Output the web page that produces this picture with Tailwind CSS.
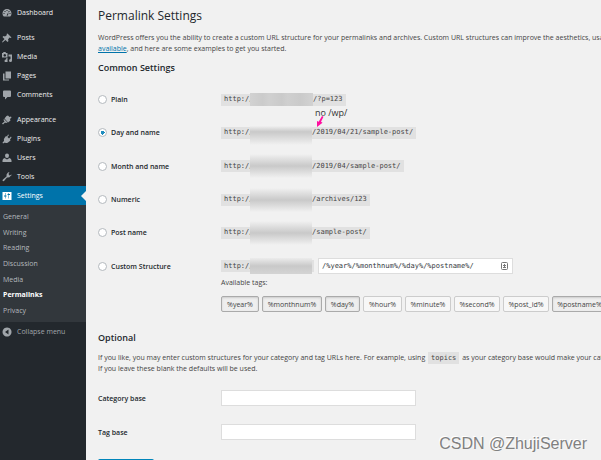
<!DOCTYPE html>
<html lang="en">
<head>
    <meta charset="UTF-8">
    <meta name="viewport" content="width=device-width, initial-scale=1.0">
    <title>Permalink Settings</title>
    <script src="https://cdn.jsdelivr.net/npm/@tailwindcss/browser@4"></script>
</head>
<body class="relative flex h-screen overflow-hidden bg-[#f1f1f1] font-['Open_Sans',sans-serif] text-[7px] leading-[11px] text-[#444]">
    <!-- Admin menu -->
    <nav class="w-[86px] shrink-0 bg-[#23282d] pt-[3px] text-[#eee]">
        <a href="#" class="flex h-[19px] items-center gap-[5px] pl-[2px] font-medium">
            <svg class="size-[10px] text-[#a0a5aa]" viewBox="0 0 20 20" fill="currentColor"><path fill-rule="evenodd" d="M3.500 17A9 9 0 1 1 16.500 17zM9 4v2h2V4zM5 6v2h2V6zM13 6v2h2V6zM3 10v2h2v-2zM15 10v2h2v-2zM9 15h3l1-7z"/></svg>
            Dashboard
        </a>
        <a href="#" class="mt-[6px] flex h-[19px] items-center gap-[5px] pl-[2px] font-medium">
            <svg class="size-[10px] text-[#a0a5aa]" viewBox="0 0 20 20" fill="currentColor"><path d="M11 1l8 8-2 1-2-1-3 4 1 3-2 2-4-4-6 5-1-1 5-6-4-4 2-2 3 1 4-3-1-2z"/></svg>
            Posts
        </a>
        <a href="#" class="flex h-[19px] items-center gap-[5px] pl-[2px] font-medium">
            <svg class="size-[10px] text-[#a0a5aa]" viewBox="0 0 20 20" fill="currentColor"><path fill-rule="evenodd" d="M0 2h2l1-2h4l1 2h3v9H0zM5.500 4a2.500 2.500 0 1 0 .1 0zM13 5h7v12a3 3 0 1 1-3-3V9h-4zM9 12h2v5a3 3 0 1 1-3-2z"/></svg>
            Media
        </a>
        <a href="#" class="flex h-[19px] items-center gap-[5px] pl-[2px] font-medium">
            <svg class="size-[10px] text-[#a0a5aa]" viewBox="0 0 20 20" fill="currentColor"><path d="M7 1h11v14H7zM2 5h3v12h9v2H2z"/></svg>
            Pages
        </a>
        <a href="#" class="flex h-[19px] items-center gap-[5px] pl-[2px] font-medium">
            <svg class="size-[10px] text-[#a0a5aa]" viewBox="0 0 20 20" fill="currentColor"><path d="M4 1h12q2 0 2 2v9q0 2-2 2h-5l-5 5v-5H4q-2 0-2-2V3q0-2 2-2z"/></svg>
            Comments
        </a>
        <a href="#" class="mt-[6px] flex h-[19px] items-center gap-[5px] pl-[2px] font-medium">
            <svg class="size-[10px] text-[#a0a5aa]" viewBox="0 0 20 20" fill="currentColor"><path d="M12 1l3 3 3-1 1 2-3 3 1 3-5 4-7-8 4-5zM4 8l7 7-3 1-2-1-4 4-2-2 5-4-2-3z"/></svg>
            Appearance
        </a>
        <a href="#" class="flex h-[19px] items-center gap-[5px] pl-[2px] font-medium">
            <svg class="size-[10px] text-[#a0a5aa]" viewBox="0 0 20 20" fill="currentColor"><path d="M12 1l2 1-3 4 3 3 4-4 1 2-3 4 1 2-5 4q-4 2-6 0l-4 2-1-2 3-3q-1-4 1-6l3-4 2 1z"/></svg>
            Plugins
        </a>
        <a href="#" class="flex h-[19px] items-center gap-[5px] pl-[2px] font-medium">
            <svg class="size-[10px] text-[#a0a5aa]" viewBox="0 0 20 20" fill="currentColor"><path d="M10 1a4 4 0 0 1 4 4q0 5-4 5T6 5a4 4 0 0 1 4-4zM5 10l5 3 5-3q4 1 4 5v3H1v-3q0-4 4-5z"/></svg>
            Users
        </a>
        <a href="#" class="flex h-[19px] items-center gap-[5px] pl-[2px] font-medium">
            <svg class="size-[10px] text-[#a0a5aa]" viewBox="0 0 20 20" fill="currentColor"><path d="M17 8q-2 4-7 3l-6 7q-2 1-3-1 0-1 1-2l7-6q-1-5 3-8l3-1-2 4 2 3 4-2q1 1-2 3z"/></svg>
            Tools
        </a>
        <a href="#" class="relative flex h-[19px] items-center gap-[5px] bg-[#0073aa] pl-[2px] font-medium text-white">
            <svg class="size-[10px]" viewBox="0 0 20 20" fill="currentColor"><path fill-rule="evenodd" d="M1 2h18v16H1zM6 4v5H4v2h2v4h1v-4h2V9H7V4zM13 4v2h-2v2h2v7h1V8h2V6h-2V4z"/></svg>
            Settings
            <span class="absolute right-0 top-[5px] border-y-[5px] border-r-[5px] border-y-transparent border-r-[#f1f1f1]"></span>
        </a>
        <div class="flex h-[117px] flex-col bg-[#32373c] py-1 pl-[3px] text-[#b4b9be]">
            <a href="#" class="flex flex-1 items-center">General</a>
            <a href="#" class="flex flex-1 items-center">Writing</a>
            <a href="#" class="flex flex-1 items-center">Reading</a>
            <a href="#" class="flex flex-1 items-center">Discussion</a>
            <a href="#" class="flex flex-1 items-center">Media</a>
            <a href="#" class="flex flex-1 items-center font-bold text-white">Permalinks</a>
            <a href="#" class="flex flex-1 items-center">Privacy</a>
        </div>
        <button type="button" class="flex h-[19px] items-center gap-[5px] pl-[2px] text-[#a0a5aa]">
            <svg class="size-[10px]" viewBox="0 0 20 20" fill="currentColor"><path fill-rule="evenodd" d="M10 1a9 9 0 1 0 .1 0zM13 5v10l-7-5z"/></svg>
            Collapse menu
        </button>
    </nav>

    <main class="min-w-0 flex-1 overflow-hidden pl-3 whitespace-nowrap">
        <h1 class="mt-2 text-[12px] leading-4 text-[#23282d]">Permalink Settings</h1>
        <p class="mt-2">WordPress offers you the ability to create a custom URL structure for your permalinks and archives. Custom URL structures can improve the aesthetics, usability,<br><a href="#" class="text-[#0073aa] underline">available</a>, and here are some examples to get you started.</p>
        <h2 class="mt-[7px] text-[9px] leading-[14px] font-semibold text-[#23282d]">Common Settings</h2>

        <form>
            <div class="mt-2 grid h-[200px] grid-rows-6 text-[#23282d]">
                <div class="flex items-center">
                    <label class="flex w-[123px] items-center gap-1 font-semibold"><input type="radio" name="structure" class="size-[9px] appearance-none rounded-full border border-[#b4b9be] bg-white checked:bg-[radial-gradient(circle,#1e8cbe_2px,#fff_2px)]">Plain</label>
                    <code class="flex h-3 items-center bg-[#e1e1e1] px-[3px] font-['DejaVu_Sans_Mono',monospace] text-[7px] text-[#444]"><span class="w-[26px]">http://</span><span class="relative h-[13px] w-[63px] bg-[linear-gradient(90deg,#d2d2d2,#cbcbcb_20%,#d0d0d0_30%,#cacaca_50%,#cfcfcf_60%,#cacaca_80%,#d2d2d2)]"></span>/?p=123</code>
                </div>
                <div class="relative flex items-center">
                    <label class="flex w-[123px] items-center gap-1 font-semibold"><input type="radio" name="structure" checked class="size-[9px] appearance-none rounded-full border border-[#b4b9be] bg-white checked:bg-[radial-gradient(circle,#1e8cbe_2px,#fff_2px)]">Day and name</label>
                    <code class="flex h-3 items-center bg-[#e1e1e1] px-[3px] font-['DejaVu_Sans_Mono',monospace] text-[7px] text-[#444]"><span class="w-[26px]">http://</span><span class="relative h-6 w-[62px] bg-linear-to-b from-[#f1f1f1] from-20% via-[#c9c9c9] via-45% to-[#f1f1f1]"></span>/2019/04/21/sample-post/</code>
                    <!-- Note above the path -->
                    <span class="absolute -top-[9px] left-[217px] text-[9px] leading-3 text-[#333]">no /wp/</span>
                    <svg class="absolute top-0 left-[218px] h-3 w-2 text-[#ff0fa0]" viewBox="0 0 8 12" fill="currentColor"><path d="M6 0l1.500.7-2.500 5 1.500 1L1 11V5l1.700.8z"/></svg>
                </div>
                <div class="flex items-center">
                    <label class="flex w-[123px] items-center gap-1 font-semibold"><input type="radio" name="structure" class="size-[9px] appearance-none rounded-full border border-[#b4b9be] bg-white checked:bg-[radial-gradient(circle,#1e8cbe_2px,#fff_2px)]">Month and name</label>
                    <code class="flex h-3 items-center bg-[#e1e1e1] px-[3px] font-['DejaVu_Sans_Mono',monospace] text-[7px] text-[#444]"><span class="w-[26px]">http://</span><span class="relative h-6 w-[62px] bg-linear-to-b from-[#f1f1f1] via-[#c9c9c9] to-[#f1f1f1]"></span>/2019/04/sample-post/</code>
                </div>
                <div class="flex items-center">
                    <label class="flex w-[123px] items-center gap-1 font-semibold"><input type="radio" name="structure" class="size-[9px] appearance-none rounded-full border border-[#b4b9be] bg-white checked:bg-[radial-gradient(circle,#1e8cbe_2px,#fff_2px)]">Numeric</label>
                    <code class="flex h-3 items-center bg-[#e1e1e1] px-[3px] font-['DejaVu_Sans_Mono',monospace] text-[7px] text-[#444]"><span class="w-[26px]">http://</span><span class="relative h-6 w-[62px] bg-linear-to-b from-[#f1f1f1] via-[#c9c9c9] to-[#f1f1f1]"></span>/archives/123</code>
                </div>
                <div class="flex items-center">
                    <label class="flex w-[123px] items-center gap-1 font-semibold"><input type="radio" name="structure" class="size-[9px] appearance-none rounded-full border border-[#b4b9be] bg-white checked:bg-[radial-gradient(circle,#1e8cbe_2px,#fff_2px)]">Post name</label>
                    <code class="flex h-3 items-center bg-[#e1e1e1] px-[3px] font-['DejaVu_Sans_Mono',monospace] text-[7px] text-[#444]"><span class="w-[26px]">http://</span><span class="relative h-6 w-[62px] bg-linear-to-b from-[#f1f1f1] via-[#c9c9c9] to-[#f1f1f1]"></span>/sample-post/</code>
                </div>
                <div class="flex items-center">
                    <label class="flex w-[123px] items-center gap-1 font-semibold"><input type="radio" name="structure" class="size-[9px] appearance-none rounded-full border border-[#b4b9be] bg-white checked:bg-[radial-gradient(circle,#1e8cbe_2px,#fff_2px)]">Custom Structure</label>
                    <code class="flex h-3 items-center bg-[#e1e1e1] pl-[3px] pr-[2px] font-['DejaVu_Sans_Mono',monospace] text-[7px] text-[#444]"><span class="w-[26px]">http://</span><span class="relative h-4 w-[62px] bg-linear-to-b from-[#ececec] via-[#c9c9c9] to-[#d4d4d4]"></span></code>
                    <div class="relative ml-1">
                        <input type="text" aria-label="Custom structure" value="/%year%/%monthnum%/%day%/%postname%/" class="block h-4 w-[195px] border border-[#ddd] bg-white px-[3px] font-['DejaVu_Sans_Mono',monospace] text-[7px] text-[#32373c]">
                        <svg class="absolute top-1 right-[5px] h-2 w-[7px]" viewBox="0 0 7 8" fill="none" stroke="#777"><rect x=".5" y=".5" width="6" height="7" rx="1"/><path d="M3.500 2v3M2 3.500h3M2 5.500h3"/></svg>
                    </div>
                </div>
            </div>

            <div class="pl-[123px]">
                <p class="-mt-[6px]">Available tags:</p>
                <div class="mt-2 flex gap-[3px]">
                    <button type="button" class="h-4 w-[38px] shrink-0 rounded-xs border border-[#aaa] bg-[#eee] shadow-[inset_0_1px_2px_#ccc]">%year%</button>
                    <button type="button" class="h-4 w-[60px] shrink-0 rounded-xs border border-[#aaa] bg-[#eee] shadow-[inset_0_1px_2px_#ccc]">%monthnum%</button>
                    <button type="button" class="h-4 w-[35px] shrink-0 rounded-xs border border-[#aaa] bg-[#eee] shadow-[inset_0_1px_2px_#ccc]">%day%</button>
                    <button type="button" class="h-4 w-[39px] shrink-0 rounded-xs border border-[#ccc] bg-[#f7f7f7]">%hour%</button>
                    <button type="button" class="h-4 w-[46px] shrink-0 rounded-xs border border-[#ccc] bg-[#f7f7f7]">%minute%</button>
                    <button type="button" class="h-4 w-[46px] shrink-0 rounded-xs border border-[#ccc] bg-[#f7f7f7]">%second%</button>
                    <button type="button" class="h-4 w-[46px] shrink-0 rounded-xs border border-[#ccc] bg-[#f7f7f7]">%post_id%</button>
                    <button type="button" class="h-4 w-[55px] shrink-0 rounded-xs border border-[#aaa] bg-[#eee] shadow-[inset_0_1px_2px_#ccc]">%postname%</button>
                </div>
            </div>

            <h2 class="mt-[19px] text-[9px] leading-[14px] font-semibold text-[#23282d]">Optional</h2>
            <p class="mt-[7px]">If you like, you may enter custom structures for your category and tag URLs here. For example, using <code class="mx-px bg-[#e1e1e1] px-[3px] py-[2px] font-['DejaVu_Sans_Mono',monospace] text-[7px] leading-[9px] text-[#444]">topics</code> as your category base would make your category<br>If you leave these blank the defaults will be used.</p>
            <div class="mt-4 flex items-center">
                <label for="category" class="w-[123px] font-semibold text-[#23282d]">Category base</label>
                <input id="category" type="text" class="h-4 w-[195px] border border-[#ddd] bg-white px-1">
            </div>
            <div class="mt-[18px] flex items-center">
                <label for="tag" class="w-[123px] font-semibold text-[#23282d]">Tag base</label>
                <input id="tag" type="text" class="h-4 w-[195px] border border-[#ddd] bg-white px-1">
            </div>
            <button type="submit" aria-label="Save Changes" class="mt-[19px] block h-[18px] w-14 rounded-xs bg-[#0085ba]"></button>
        </form>
    </main>

    <span class="absolute right-[14px] bottom-[6px] font-['Liberation_Sans',sans-serif] text-[16px] leading-5 text-[#808080] [text-shadow:-1px_-1px_0_#fff]">CSDN @ZhujiServer</span>
</body>
</html>
